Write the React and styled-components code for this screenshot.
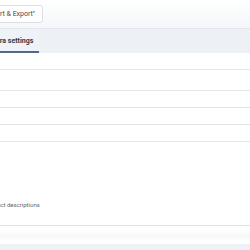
import React from "react";
import styled, { createGlobalStyle } from "styled-components";

const Global = createGlobalStyle`
  html, body { margin: 0; padding: 0; background: #fff; overflow: hidden; }
  body { font-family: Roboto, "Liberation Sans", sans-serif; }
`;

const Page = styled.div`
  width: 250px;
  height: 250px;
  display: flex;
  flex-direction: column;
  overflow: hidden;
`;

const Header = styled.div`
  height: 29px;
  box-sizing: border-box;
  padding-top: 5px;
  background: linear-gradient(#ffffff, #f4f6f9);
  border-bottom: 1px solid #e3e7ec;
  display: flex;
  align-items: flex-start;
`;

const Button = styled.button`
  height: 18px;
  margin-left: -24px;
  padding: 0 7px 0 7px;
  border: 1px solid #dcdfe4;
  border-radius: 3px;
  background: #fff;
  color: #4a4a4a;
  font-family: inherit;
  font-size: 7px;
  line-height: 16px;
  white-space: nowrap;
`;

const TabBar = styled.div`
  height: 24px;
  box-sizing: border-box;
  background: #edf0f4;
  display: flex;
  align-items: stretch;
`;

const Tab = styled.div`
  margin-left: ${(p) => p.$offset || 0}px;
  padding: 0 6px;
  display: flex;
  align-items: center;
  padding-top: 2px;
  font-size: 7px;
  font-weight: 700;
  color: #333a42;
  white-space: nowrap;
  border-bottom: 2px solid ${(p) => (p.$active ? "#4d6b89" : "transparent")};
  background: ${(p) => (p.$active ? "#eff2f6" : "transparent")};
`;

const Content = styled.div`
  display: flex;
  flex-direction: column;
  flex: 1;
`;

const Row = styled.div`
  height: ${(p) => p.$h}px;
  border-bottom: 1px solid ${(p) => p.$line || "#e3e6e9"};
  display: flex;
  align-items: flex-end;
  padding-bottom: ${(p) => p.$pb || 0}px;
  box-sizing: content-box;
`;

const Label = styled.span`
  margin-left: ${(p) => p.$offset}px;
  font-size: 6px;
  color: #666666;
  white-space: nowrap;
`;

const Spacer = styled.div`
  height: ${(p) => p.$h}px;
`;

const Fade = styled.div`
  height: 11px;
  background: linear-gradient(#fff, #f6f7f9 60%, #fff);
`;

const Footer = styled.div`
  flex: 1;
  background: #eef1f5;
`;

export default function App() {
  return (
    <Page>
      <Global />
      <Header>
        <Button>Import &amp; Export"</Button>
      </Header>
      <TabBar>
        <Tab $active $offset={-16}>Extra settings</Tab>
      </TabBar>
      <Content>
        <Row $h={16} $line="#e4e9ef" />
        <Row $h={20} />
        <Row $h={16} />
        <Row $h={16} />
        <Row $h={16} />
        <Row $h={66} $pb={17} $line="#dfe3e6">
          <Label $offset={-36}>Include product descriptions</Label>
        </Row>
        <Spacer $h={4} />
        <Fade />
        <Spacer $h={3} />
        <Footer />
      </Content>
    </Page>
  );
}
